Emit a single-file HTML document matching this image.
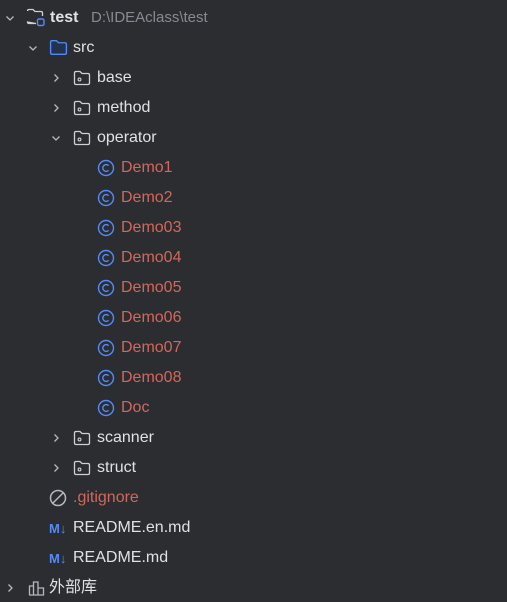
<!DOCTYPE html>
<html><head><meta charset="utf-8"><style>
body{margin:0;width:507px;height:599px;background:#2b2d30;overflow:hidden;font-family:"Liberation Sans","Noto Sans CJK SC",sans-serif;font-size:16px;color:#dfe1e5}
.r{position:absolute;left:0;height:30px;width:507px}
.r span{position:absolute;top:7px;line-height:18px;white-space:nowrap}
.r svg{position:absolute}
.red{color:#d3675c}
.gray{color:#868a91}
</style></head><body>
<svg width="0" height="0" style="position:absolute">
<defs>
<symbol id="chd" viewBox="0 0 10 10"><path d="M1.5 3.5 L5 7 L8.5 3.5" fill="none" stroke="#b4b8bf" stroke-width="1.3"/></symbol>
<symbol id="chr" viewBox="0 0 10 10"><path d="M3.5 1.5 L7 5 L3.5 8.5" fill="none" stroke="#b4b8bf" stroke-width="1.3"/></symbol>
<symbol id="pk" viewBox="0 0 18 16"><path d="M1.5 3 Q1.5 1.5 3 1.5 H7 L9 3.5 H15 Q16.5 3.5 16.5 5 V13 Q16.5 14.5 15 14.5 H3 Q1.5 14.5 1.5 13 Z" fill="none" stroke="#ced0d6" stroke-width="1.3"/><circle cx="6.5" cy="9.5" r="1.4" fill="none" stroke="#ced0d6" stroke-width="1.1"/></symbol>
<symbol id="cl" viewBox="0 0 18 18"><circle cx="9" cy="9" r="7.5" fill="none" stroke="#548af7" stroke-width="1.4"/><path d="M11.6 6.6 A3.4 3.4 0 1 0 11.6 11.4" fill="none" stroke="#548af7" stroke-width="1.4"/></symbol>
</defs></svg>

<div class="r" style="top:2px"><svg style="left:5px;top:11px" width="10" height="10"><use href="#chd"/></svg>
<svg style="left:26px;top:6px" width="20" height="20" viewBox="0 0 20 20"><path d="M1.5 3 Q1.5 1.5 3 1.5 H7 L9 3.5 H15 Q16.5 3.5 16.5 5 V8 M10 15.5 H3 Q1.5 15.5 1.5 14 Z" fill="none" stroke="#ced0d6" stroke-width="1.3"/><rect x="11.5" y="11" width="6.5" height="6.5" rx="1.5" fill="none" stroke="#548af7" stroke-width="1.4"/></svg>
<span style="left:50px;font-weight:bold">test</span><span class="gray" style="left:91px;font-size:15px">D:\IDEAclass\test</span></div>

<div class="r" style="top:32px"><svg style="left:28px;top:11px" width="10" height="10"><use href="#chd"/></svg>
<svg style="left:49px;top:7px" width="19" height="17" viewBox="0 0 18 16"><path d="M1.5 3 Q1.5 1.5 3 1.5 H7 L9 3.5 H15 Q16.5 3.5 16.5 5 V13 Q16.5 14.5 15 14.5 H3 Q1.5 14.5 1.5 13 Z" fill="#25324d" stroke="#548af7" stroke-width="1.3"/></svg>
<span style="left:73px">src</span></div>

<div class="r" style="top:62px"><svg style="left:51px;top:11px" width="10" height="10"><use href="#chr"/></svg><svg style="left:73px;top:8px" width="18" height="16"><use href="#pk"/></svg><span style="left:97px">base</span></div>
<div class="r" style="top:92px"><svg style="left:51px;top:11px" width="10" height="10"><use href="#chr"/></svg><svg style="left:73px;top:8px" width="18" height="16"><use href="#pk"/></svg><span style="left:97px">method</span></div>
<div class="r" style="top:122px"><svg style="left:51px;top:11px" width="10" height="10"><use href="#chd"/></svg><svg style="left:73px;top:8px" width="18" height="16"><use href="#pk"/></svg><span style="left:97px">operator</span></div>

<div class="r" style="top:152px"><svg style="left:97px;top:7px" width="18" height="18"><use href="#cl"/></svg><span class="red" style="left:121px">Demo1</span></div>
<div class="r" style="top:182px"><svg style="left:97px;top:7px" width="18" height="18"><use href="#cl"/></svg><span class="red" style="left:121px">Demo2</span></div>
<div class="r" style="top:212px"><svg style="left:97px;top:7px" width="18" height="18"><use href="#cl"/></svg><span class="red" style="left:121px">Demo03</span></div>
<div class="r" style="top:242px"><svg style="left:97px;top:7px" width="18" height="18"><use href="#cl"/></svg><span class="red" style="left:121px">Demo04</span></div>
<div class="r" style="top:272px"><svg style="left:97px;top:7px" width="18" height="18"><use href="#cl"/></svg><span class="red" style="left:121px">Demo05</span></div>
<div class="r" style="top:302px"><svg style="left:97px;top:7px" width="18" height="18"><use href="#cl"/></svg><span class="red" style="left:121px">Demo06</span></div>
<div class="r" style="top:332px"><svg style="left:97px;top:7px" width="18" height="18"><use href="#cl"/></svg><span class="red" style="left:121px">Demo07</span></div>
<div class="r" style="top:362px"><svg style="left:97px;top:7px" width="18" height="18"><use href="#cl"/></svg><span class="red" style="left:121px">Demo08</span></div>
<div class="r" style="top:392px"><svg style="left:97px;top:7px" width="18" height="18"><use href="#cl"/></svg><span class="red" style="left:121px">Doc</span></div>

<div class="r" style="top:422px"><svg style="left:51px;top:11px" width="10" height="10"><use href="#chr"/></svg><svg style="left:73px;top:8px" width="18" height="16"><use href="#pk"/></svg><span style="left:97px">scanner</span></div>
<div class="r" style="top:452px"><svg style="left:51px;top:11px" width="10" height="10"><use href="#chr"/></svg><svg style="left:73px;top:8px" width="18" height="16"><use href="#pk"/></svg><span style="left:97px">struct</span></div>

<div class="r" style="top:482px"><svg style="left:49px;top:7px" width="18" height="18" viewBox="0 0 18 18"><circle cx="9" cy="9" r="7.5" fill="none" stroke="#b4b8bf" stroke-width="1.5"/><path d="M4 14 L14 4" stroke="#b4b8bf" stroke-width="1.5"/></svg><span class="red" style="left:73px">.gitignore</span></div>

<div class="r" style="top:512px"><span style="left:49px;top:8px;font-size:13px;font-weight:bold;color:#548af7">M↓</span><span style="left:73px">README.en.md</span></div>
<div class="r" style="top:542px"><span style="left:49px;top:8px;font-size:13px;font-weight:bold;color:#548af7">M↓</span><span style="left:73px">README.md</span></div>

<div class="r" style="top:572px"><svg style="left:5px;top:11px" width="10" height="10"><use href="#chr"/></svg>
<svg style="left:28px;top:8px" width="18" height="16" viewBox="0 0 18 16"><path d="M1.5 15 V6 H5.5 V15 M5.5 15 V2 H10 V15 M10 15 V8 H15.5 V15 Z M1 15 H16" fill="none" stroke="#b4b8bf" stroke-width="1.3"/></svg>
<span style="left:49px">外部库</span></div>
</body></html>
